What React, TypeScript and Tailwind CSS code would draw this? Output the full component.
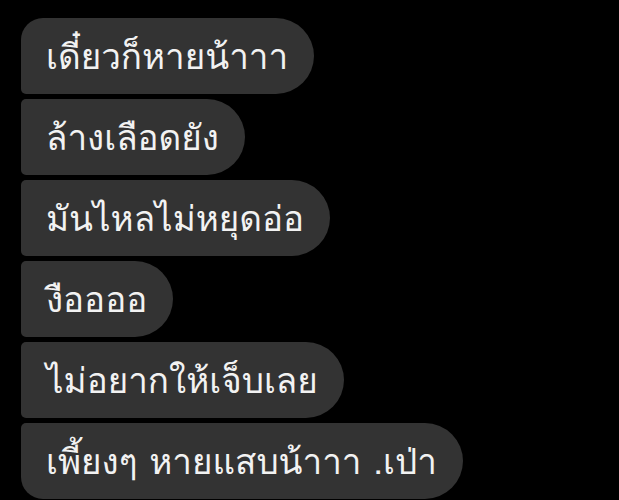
import React from "react";

const msgs = [
  { t: "เดี๋ยวก็หายน้าาา", r: "rounded-tl-[22px] rounded-bl-[5px]" },
  { t: "ล้างเลือดยัง", r: "rounded-tl-[5px] rounded-bl-[5px]" },
  { t: "มันไหลไม่หยุดอ่อ", r: "rounded-tl-[5px] rounded-bl-[5px]" },
  { t: "งืออออ", r: "rounded-tl-[5px] rounded-bl-[5px]" },
  { t: "ไม่อยากให้เจ็บเลย", r: "rounded-tl-[5px] rounded-bl-[5px]" },
  { t: "เพี้ยงๆ หายแสบน้าาา .เป่า", r: "rounded-tl-[5px] rounded-bl-[22px]" },
];

export default function App() {
  return (
    <div className="w-[619px] h-[500px] overflow-hidden bg-black pt-[18px] pl-[21px] flex flex-col items-start gap-[5px]">
      {msgs.map((m, i) => (
        <div
          key={i}
          className={`h-[76px] shrink-0 flex items-center pl-[25px] pr-[26px] bg-[#333333] rounded-tr-[38px] rounded-br-[38px] ${m.r}`}
        >
          <span
            className="text-[35px] leading-none text-[#f2f2f2] whitespace-nowrap"
            style={{ fontFamily: '"Loma", "Noto Sans Thai", sans-serif' }}
          >
            {m.t}
          </span>
        </div>
      ))}
    </div>
  );
}
